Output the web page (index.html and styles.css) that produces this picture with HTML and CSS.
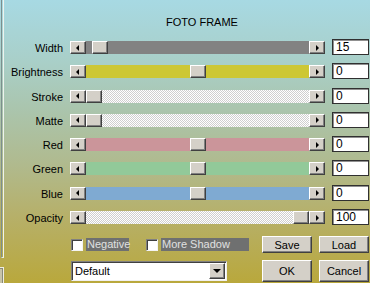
FILE: index.html
```html
<!DOCTYPE html>
<html>
<head>
<meta charset="utf-8">
<title>Foto Frame</title>
<link rel="stylesheet" href="styles.css">
</head>
<body>
<div class="app">
  <div class="edge">
    <div class="edge-top"></div>
    <div class="edge-bottom"></div>
  </div>
  <div class="main">
    <div class="title">FOTO FRAME</div>
    <div class="rows">
      <div class="label">Width</div>
      <div class="scroll"><span class="arrow left"></span><div class="track t-gray"><span class="thumb" style="margin-left:6px"></span></div><span class="arrow right"></span></div>
      <div class="field">15</div>

      <div class="label">Brightness</div>
      <div class="scroll"><span class="arrow left"></span><div class="track t-yellow"><span class="thumb" style="margin-left:104px"></span></div><span class="arrow right"></span></div>
      <div class="field">0</div>

      <div class="label">Stroke</div>
      <div class="scroll"><span class="arrow left"></span><div class="track t-check"><span class="thumb" style="margin-left:0px"></span></div><span class="arrow right"></span></div>
      <div class="field">0</div>

      <div class="label">Matte</div>
      <div class="scroll"><span class="arrow left"></span><div class="track t-check"><span class="thumb" style="margin-left:0px"></span></div><span class="arrow right"></span></div>
      <div class="field">0</div>

      <div class="label">Red</div>
      <div class="scroll"><span class="arrow left"></span><div class="track t-red"><span class="thumb" style="margin-left:104px"></span></div><span class="arrow right"></span></div>
      <div class="field">0</div>

      <div class="label">Green</div>
      <div class="scroll"><span class="arrow left"></span><div class="track t-green"><span class="thumb" style="margin-left:104px"></span></div><span class="arrow right"></span></div>
      <div class="field">0</div>

      <div class="label">Blue</div>
      <div class="scroll"><span class="arrow left"></span><div class="track t-blue"><span class="thumb" style="margin-left:104px"></span></div><span class="arrow right"></span></div>
      <div class="field">0</div>

      <div class="label">Opacity</div>
      <div class="scroll"><span class="arrow left"></span><div class="track t-check"><span class="thumb" style="margin-left:207px"></span></div><span class="arrow right"></span></div>
      <div class="field">100</div>
    </div>

    <div class="bottom">
      <div class="checks">
        <span class="box"></span><span class="cb-label cb-neg">Negative</span>
        <span class="box box2"></span><span class="cb-label cb-shadow">More Shadow</span>
      </div>
      <button class="btn">Save</button>
      <button class="btn">Load</button>

      <div class="select">
        <span class="select-text">Default</span>
        <span class="select-btn"><span class="down"></span></span>
      </div>
      <button class="btn btn-big">OK</button>
      <button class="btn btn-big">Cancel</button>
    </div>
  </div>
</div>
</body>
</html>
```
FILE: styles.css
```css
* { box-sizing: border-box; }
html, body { margin: 0; padding: 0; }
body {
  width: 370px;
  height: 283px;
  overflow: hidden;
  font-family: "Liberation Sans", Arial, sans-serif;
  font-size: 11px;
  color: #000;
}
.app {
  width: 370px;
  height: 283px;
  display: flex;
  background: linear-gradient(to bottom, #a7d9e3 0%, #a9cfc8 22%, #aac5ae 38%, #b0ba8e 58%, #b6b06a 76%, #b9a83c 100%);
}
.edge {
  width: 4px;
  flex: none;
  display: flex;
  flex-direction: column;
}
.edge-top {
  margin-left: 1px;
  width: 3px;
  height: 258px;
  border-left: 1px solid #7d8f8e;
  border-right: 1px solid #eef3ee;
  border-bottom: 1px solid #e8ecd8;
}
.edge-bottom {
  margin-top: 9px;
  width: 4px;
  height: 16px;
  background: #c8c4a8;
  border-top: 1px solid #eeeee0;
  border-right: 1px solid #eeeee0;
  box-shadow: inset -1px 1px #8a8a78;
}
.main {
  flex: 1;
  display: flex;
  flex-direction: column;
  padding-top: 15px;
}
.title {
  line-height: 15px;
  text-align: center;
  padding-left: 30px;
}
.rows {
  margin-top: 9px;
  display: grid;
  grid-template-columns: 59px 255px 37px;
  grid-auto-rows: 16px;
  column-gap: 7px;
  row-gap: 8.3px;
}
.label {
  text-align: right;
  line-height: 16px;
  padding-top: 1px;
  white-space: nowrap;
}
.scroll {
  margin-top: 2px;
  height: 13px;
  display: flex;
}
.arrow, .thumb {
  flex: none;
  width: 16px;
  height: 13px;
  background: #d4d0c8;
  border-top: 1px solid #fff;
  border-left: 1px solid #fff;
  border-right: 1px solid #404040;
  border-bottom: 1px solid #404040;
  box-shadow: inset -1px -1px #808080;
  display: flex;
  align-items: center;
  justify-content: center;
}
.arrow::before {
  content: "";
  width: 0;
  height: 0;
  border-top: 3px solid transparent;
  border-bottom: 3px solid transparent;
}
.arrow.left::before { border-right: 3px solid #000; margin-left: -1px; }
.arrow.right::before { border-left: 3px solid #000; }
.track {
  flex: 1;
  display: flex;
  height: 13px;
}
.t-gray { background: #828282; }
.t-yellow { background: #cdc734; }
.t-red { background: #cb959a; }
.t-green { background: #92c999; }
.t-blue { background: #7faad2; }
.t-check {
  background: repeating-conic-gradient(#ffffff 0 25%, #cfcfcf 0 50%) 0 0 / 2px 2px;
}
.field {
  background: #fff;
  border: 1px solid #303030;
  box-shadow: inset 1px 1px #909090;
  line-height: 14px;
  padding-left: 3px;
  height: 16px;
  font-size: 12px;
}
.bottom {
  margin-top: 11px;
  padding-left: 67px;
  display: grid;
  grid-template-columns: 184px 50px 50px;
  grid-template-rows: 17px 22px;
  column-gap: 7px;
  row-gap: 7px;
}
.checks {
  display: flex;
  align-items: center;
}
.box {
  width: 12px;
  height: 12px;
  flex: none;
  background: #fff;
  border-top: 1px solid #808080;
  border-left: 1px solid #808080;
  border-right: 1px solid #f4f4f4;
  border-bottom: 1px solid #f4f4f4;
  box-shadow: inset 1px 1px #404040;
}
.box2 { margin-left: 17px; }
.cb-label {
  margin-left: 3px;
  background: #6f7070;
  color: #e0e0e0;
  height: 13px;
  line-height: 13px;
  padding-left: 1px;
  white-space: nowrap;
}
.cb-neg { width: 43px; }
.cb-shadow { width: 88px; }
.btn {
  font: inherit;
  color: #000;
  margin: 0;
  padding: 0;
  background: #d4d0c8;
  border-top: 1px solid #fff;
  border-left: 1px solid #fff;
  border-right: 1px solid #404040;
  border-bottom: 1px solid #404040;
  box-shadow: inset -1px -1px #808080;
  line-height: 14px;
  text-align: center;
}
.btn-big { line-height: 19px; }
.select {
  width: 156px;
  height: 20px;
  margin-top: 1px;
  background: #fff;
  border-top: 1px solid #808080;
  border-left: 1px solid #808080;
  border-right: 1px solid #f0f0f0;
  border-bottom: 1px solid #f0f0f0;
  box-shadow: inset 1px 1px #404040;
  display: flex;
  align-items: center;
  padding: 2px 1px 2px 3px;
}
.select-text {
  flex: 1;
  line-height: 16px;
}
.select-btn {
  width: 16px;
  height: 16px;
  background: #d4d0c8;
  border-top: 1px solid #fff;
  border-left: 1px solid #fff;
  border-right: 1px solid #404040;
  border-bottom: 1px solid #404040;
  box-shadow: inset -1px -1px #808080;
  display: flex;
  align-items: center;
  justify-content: center;
}
.down {
  width: 0;
  height: 0;
  border-left: 4px solid transparent;
  border-right: 4px solid transparent;
  border-top: 4px solid #000;
}
```
